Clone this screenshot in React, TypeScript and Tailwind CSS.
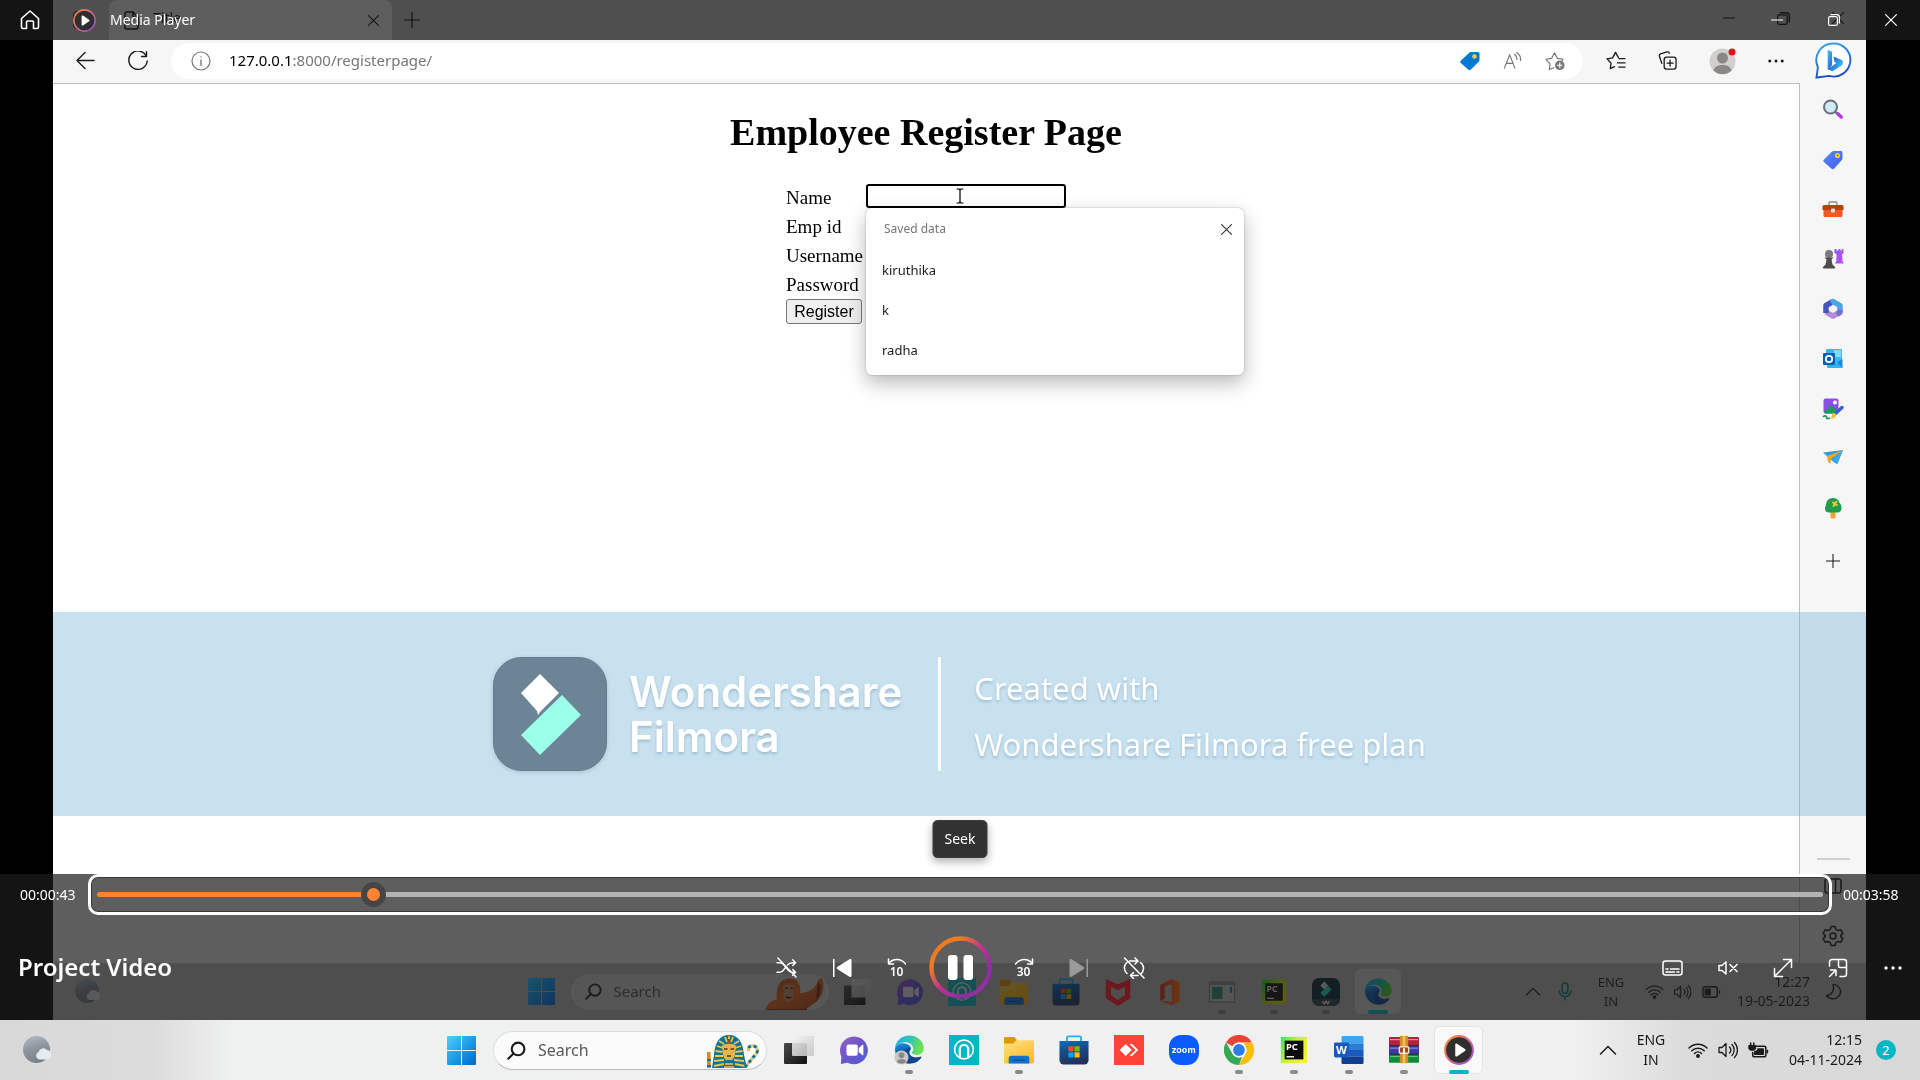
import React from "react";

type IconProps = { className?: string };
type SvgProps = { className?: string; box?: string; children: React.ReactNode };

const UI = "font-['Noto_Sans','Open_Sans',sans-serif]";

/* Base wrappers ---------------------------------------------------- */

function Line({ className = "size-6", box = "0 0 24 24", children }: SvgProps) {
  return (
    <svg className={className} viewBox={box} fill="none" stroke="currentColor" strokeWidth="1.5" strokeLinecap="round" strokeLinejoin="round" aria-hidden="true">
      {children}
    </svg>
  );
}

function Art({ className = "size-6", box = "0 0 32 32", children }: SvgProps) {
  return (
    <svg className={className} viewBox={box} aria-hidden="true">
      {children}
    </svg>
  );
}

function Gradient({ id, stops, x2 = 1, y2 = 1 }: { id: string; stops: string[]; x2?: number; y2?: number }) {
  return (
    <linearGradient id={id} x1="0" y1="0" x2={x2} y2={y2}>
      {stops.map((c, i) => (
        <stop key={i} offset={i / (stops.length - 1)} stopColor={c} />
      ))}
    </linearGradient>
  );
}

function SharedGradients() {
  return (
    <svg className="absolute size-0" aria-hidden="true">
      <defs>
        <Gradient id="g-win" stops={["#4cd0ff", "#1e9de6", "#0067c8"]} />
        <Gradient id="g-chat" stops={["#9a5fc4", "#6a57c9", "#4f5fd6"]} />
        <Gradient id="g-edge-top" stops={["#2aa7e8", "#2bc3c0", "#6ee04d"]} y2={0.3} />
        <Gradient id="g-edge-bot" stops={["#1b9be8", "#0c59a4", "#124a8f"]} x2={0.4} />
        <Gradient id="g-folder" stops={["#ffe08a", "#fbbf24"]} x2={0.6} />
        <Gradient id="g-store" stops={["#0a6fc2", "#174a86", "#22325c"]} x2={0.3} />
        <Gradient id="g-player" stops={["#ff8a2b", "#d9678c", "#8a4fd0"]} />
        <Gradient id="g-pause" stops={["#f07a22", "#f07a22", "#c0348f", "#8a2f9e", "#a02cb0"]} />
        <Gradient id="g-pc" stops={["#2fe86a", "#c8f03a", "#f6ef3a"]} y2={0.6} />
        <Gradient id="g-bing" stops={["#35a8ea", "#2d7fd8", "#1e4fc0"]} x2={0.3} />
        <Gradient id="g-bing-b" stops={["#3ac6f2", "#2b6fe0", "#37c3e8"]} y2={0.7} />
        <Gradient id="g-moon" stops={["#b6c0ca", "#8e979f", "#7a8289"]} x2={0.3} />
        <Gradient id="g-office" stops={["#b8322a", "#ea5a2c", "#f5873a"]} y2={0} />
        <Gradient id="g-ape" stops={["#a4552c", "#d4713c", "#9c4c28"]} />
        <Gradient id="g-black" stops={["#4a4a4a", "#111111"]} />
        <Gradient id="g-glass" stops={["#f4f4f4", "#c4c4c4"]} />
        <Gradient id="g-tag" stops={["#5b8df6", "#3e5bf0"]} />
        <Gradient id="g-purple" stops={["#8a5cf0", "#c04af0"]} />
      </defs>
    </svg>
  );
}

/* Taskbar artwork -------------------------------------------------- */

const WindowsIcon = ({ className }: IconProps) => (
  <Art className={className} box="0 0 29 29">
    <path fill="url(#g-win)" d="M1 0h13v14H0V1a1 1 0 0 1 1-1ZM15 0h13a1 1 0 0 1 1 1v13H15ZM0 15h14v14H1a1 1 0 0 1-1-1ZM15 15h14v13a1 1 0 0 1-1 1H15Z" />
  </Art>
);

const WeatherIcon = ({ className }: IconProps) => (
  <Art className={className} box="0 0 28 28">
    <circle cx="13.500" cy="13.500" r="13.500" fill="url(#g-moon)" />
    <path fill="#e6ebf0" d="M16 23.500a4 4 0 0 1-.5-7.500 5 5 0 0 1 8.500-2 4 4 0 0 1 4 5 4 4 0 0 1-3.500 4.500Z" />
  </Art>
);

const TaskViewIcon = ({ className }: IconProps) => (
  <Art className={className} box="0 0 30 28">
    <rect y="7" width="23" height="21" rx="1" fill="url(#g-black)" />
    <rect x="8" y="0" width="22" height="20" rx="1" fill="url(#g-glass)" opacity="0.88" />
  </Art>
);

const ChatIcon = ({ className }: IconProps) => (
  <Art className={className}>
    <path fill="url(#g-chat)" d="M16 1.500a15 14.800 0 1 1-7 28L2 31l.5-8A15 15 0 0 1 16 1.500Z" />
    <rect x="8" y="10" width="12" height="12" rx="2" fill="#fff" />
    <path fill="#fff" d="m21 14 4-3.500c.6-.4 1-.2 1 .4v10.200c0 .6-.4.8-1 .4L21 18Z" />
  </Art>
);

const EdgeIcon = ({ className, badge = false }: IconProps & { badge?: boolean }) => (
  <Art className={className}>
    <path fill="url(#g-edge-bot)" d="M1 15C2 10 7 8 12 9c4 .8 6.500 3.500 6 6-.5 1.500-2 2.500-1.500 5 .8 3 5 4.500 9 3.800 1.500-.3 3-1 3.500-.5.500.500-.4 1.500-1 2.200A15.500 15.500 0 0 1 1 15Z" />
    <path fill="#0b3f86" opacity="0.55" d="M11 17c-1 6 3 12 10 13.200A15.500 15.500 0 0 0 28 25.500c.8-1 1.500-2 .8-2.400-.8-.2-2 .7-4.500.9-5 .4-9-3-8-6.600.3-1.200 1-1.800 1.500-2.700C15 13 11.600 13.500 11 17Z" />
    <path fill="url(#g-edge-top)" d="M1 14C2 6 8.500.500 16.500.500 25 .5 32 7 31.700 14.500c-.2 4.500-3.500 7-8 6.700-2.500-.2-5-1.200-4.700-2.500.2-.9 1.500-1.500 1.500-4C20.400 10.500 16 7.500 11 7.800 6.500 8 3 10.500 1 14Z" />
    {badge && (
      <g>
        <circle cx="8" cy="24" r="7.500" fill="#c9c7c5" />
        <circle cx="8" cy="21.500" r="3" fill="#8a8886" />
        <path fill="#8a8886" d="M3 28.500a5.300 4.500 0 0 1 10 0 7 7 0 0 1-10 0Z" />
      </g>
    )}
  </Art>
);

const TealAppIcon = ({ className }: IconProps) => (
  <Art className={className}>
    <path fill="#00b7c3" d="M0 0h32v32H0z" />
    <circle cx="16" cy="15.500" r="10" fill="none" stroke="#fff" strokeWidth="1.800" />
    <path fill="none" stroke="#fff" strokeWidth="2.400" d="M11.500 24v-9a4.500 4.500 0 0 1 9 0v9" />
  </Art>
);

const FolderIcon = ({ className }: IconProps) => (
  <Art className={className}>
    <path fill="#d99a06" d="M0 3.500A1.500 1.500 0 0 1 1.500 2H11l3 3.500V12H0Z" />
    <path fill="url(#g-folder)" d="M0 9h10l3-3.500h17.500A1.500 1.500 0 0 1 32 7v22a1.500 1.500 0 0 1-1.500 1.500h-29A1.500 1.500 0 0 1 0 29Z" />
    <path fill="#1173c8" d="M5 30.500V25a3 3 0 0 1 3-3h16a3 3 0 0 1 3 3v5.500Z" />
    <rect x="10" y="26" width="12" height="1.500" rx=".7" fill="#0a4f94" />
  </Art>
);

const StoreIcon = ({ className }: IconProps) => (
  <Art className={className}>
    <path fill="none" stroke="#22b3ee" strokeWidth="2" d="M8.500 9V3a1.500 1.500 0 0 1 1.500-1.500h12A1.500 1.500 0 0 1 23.500 3v6" />
    <path fill="url(#g-store)" d="M.5 6.500h31V27a4.500 4.500 0 0 1-4.500 4.500H5A4.500 4.500 0 0 1 .5 27Z" />
    <path fill="#f25022" d="M10 12h5.500v5.500H10z" />
    <path fill="#7fba00" d="M16.500 12H22v5.500h-5.500z" />
    <path fill="#00a4ef" d="M10 18.500h5.500V24H10z" />
    <path fill="#ffb900" d="M16.500 18.500H22V24h-5.500z" />
  </Art>
);

const AnyDeskIcon = ({ className }: IconProps) => (
  <Art className={className}>
    <path fill="#ff4338" d="M0 0h32v32H0z" />
    <path fill="#fff" d="m12.500 9.500 6.500 6.500-6.500 6.500L6 16ZM16.500 9.500h2.800l6.500 6.500-6.500 6.500h-2.800L23 16Z" />
  </Art>
);

const ZoomIcon = ({ className }: IconProps) => (
  <span className={`${className} flex items-center justify-center rounded-[12px] bg-[#0b5cff] pb-[2px] font-['Inter',sans-serif] text-[9px] leading-none font-bold text-white`}>zoom</span>
);

const ChromeIcon = ({ className }: IconProps) => (
  <Art className={className}>
    <path fill="#ea4335" d="M2.100 8A16 16 0 0 1 29.900 8H16a8 8 0 0 0-7 4Z" />
    <path fill="#fbbc04" d="M29.900 8A16 16 0 0 1 16 32l6.900-12A8 8 0 0 0 22.900 12L21 8Z" />
    <path fill="#34a853" d="M2.100 8 9.100 20A8 8 0 0 0 19.500 23.200L16 32A16 16 0 0 1 2.100 8Z" />
    <circle cx="16" cy="16" r="8" fill="#fff" />
    <circle cx="16" cy="16" r="6.300" fill="#2f7de9" />
  </Art>
);

const PyCharmIcon = ({ className }: IconProps) => (
  <Art className={className}>
    <path fill="url(#g-pc)" d="M2 2h28v28H2z" />
    <path fill="#0a0a0a" d="M6 6h20v20H6z" />
    <path fill="#fff" d="M8 22.500h8V24H8z" />
    <text x="7.500" y="16" fontSize="10" fontWeight="700" fill="#fff" fontFamily="Noto Sans, sans-serif">PC</text>
  </Art>
);

const WordIcon = ({ className }: IconProps) => (
  <Art className={className}>
    <path fill="#41a5ee" d="M9 1h21a1.500 1.500 0 0 1 1.500 1.500V9H8V2.500A1.500 1.500 0 0 1 9 1Z" />
    <path fill="#2b7cd3" d="M8 9h23.500v7H8z" />
    <path fill="#185abd" d="M8 16h23.500v7H8z" />
    <path fill="#103f91" d="M8 23h23.500v6.500A1.500 1.500 0 0 1 30 31H9.500A1.500 1.500 0 0 1 8 29.500Z" />
    <rect x="0" y="8" width="16" height="16" rx="1.500" fill="#185abd" />
    <text x="2" y="20.500" fontSize="12" fontWeight="700" fill="#fff" fontFamily="Noto Sans, sans-serif">W</text>
  </Art>
);

const RarIcon = ({ className }: IconProps) => (
  <Art className={className}>
    <rect y="2" width="32" height="9.500" rx="1" fill="#b3213c" />
    <rect y="11.500" width="32" height="9" rx="1" fill="#3d3aa8" />
    <rect y="20.500" width="32" height="9" rx="1" fill="#118a3a" />
    <path stroke="#e8b7c0" strokeWidth="1" d="M1 5h30" />
    <path stroke="#9d9bea" strokeWidth="1" d="M1 14h30" />
    <path stroke="#5fd488" strokeWidth="1" d="M1 23h30" />
    <path stroke="#1c1c2a" strokeWidth="1.200" d="M0 11.500h32M0 20.500h32" />
    <path fill="#d78a2c" d="M11.500 1h9v29h-9z" />
    <path fill="#f1c05e" d="M14.500 1h3v29h-3z" />
    <rect x="11" y="12.500" width="10" height="7" rx="1" fill="#a8481c" stroke="#f4e3c0" strokeWidth="1.500" />
    <path fill="#fff" d="M15 14h2v6h-2z" />
  </Art>
);

const MediaIcon = ({ className }: IconProps) => (
  <Art className={className}>
    <circle cx="16" cy="16" r="14.800" fill="#2f2f2f" stroke="url(#g-player)" strokeWidth="2.200" />
    <path fill="#fff" d="M12 10.200c0-1 1-1.500 1.800-1l8.600 5.700c.8.500.8 1.600 0 2.100l-8.600 5.800c-.8.500-1.800 0-1.800-1Z" />
  </Art>
);

const McAfeeIcon = ({ className }: IconProps) => (
  <Art className={className}>
    <path fill="#e0262f" d="m2 1 14 6 14-6v22l-14 9-14-9Zm6 9v9.500l8 5.500 8-5.500V10l-8 4Z" />
  </Art>
);

const OfficeIcon = ({ className }: IconProps) => (
  <Art className={className}>
    <path fill="url(#g-office)" d="M18 1 27.500 4.500V27L18 31 5 26l13 1.500V7l-8 2.500v14L5 26V8Z" />
  </Art>
);

const WindowAppIcon = ({ className }: IconProps) => (
  <Art className={className}>
    <path fill="#dcdcdc" stroke="#6f6f6f" d="M1.500 4.500h29v23h-29z" />
    <path fill="#8f989f" d="M2 5h28v3H2z" />
    <path fill="#3f8f80" d="M4.500 10h12v14h-12z" />
    <path fill="#2e7fb8" d="M25 10h2.500v7H25z" />
  </Art>
);

const FilmoraIcon = ({ className }: IconProps) => (
  <Art className={className}>
    <rect width="32" height="32" rx="8" fill="#0b2330" />
    <path fill="#e4f2f4" d="m14 4 4.500 4.500L14 13 9.500 8.500Z" />
    <path fill="#4fe0c4" d="m18 8.500 4.500 4.500-8.500 8.500L9.500 17Z" />
    <path fill="#36474f" d="M1 24h30a8 8 0 0 1-7 8H8a8 8 0 0 1-7-8Z" />
    <path fill="none" stroke="#fff" strokeWidth="1.500" d="m12 26.500 2 3 2-3 2 3 2-3" />
  </Art>
);

const PharaohIcon = ({ className }: IconProps) => (
  <Art className={className} box="0 0 54 34">
    <path fill="#0e7490" d="M22 1c-10 0-14 8-15 20L5 34h35l-3-13C36 9 32 1 22 1Z" />
    <path stroke="#f2c14e" strokeWidth="1.800" fill="none" d="M12 7l5 3M10 12l6 2M8.500 17l7 1M8 22l8 0M7 27l10-1M7 32l10-2M32 7l-5 3M34 12l-6 2M35.500 17l-7 1M36 22l-8 0M37 27l-10-1M38 32l-10-2M18 3l2 5M22 2v6M26 3l-2 5" />
    <path fill="#e9b44c" d="M15 12c2-3 12-3 14 0l-1 9c-1 4-4 6-6 6s-5-2-6-6Z" />
    <path stroke="#5b3410" strokeWidth="1.300" d="M17 15h3.500M23.500 15H27M20 22h4" />
    <path fill="#0e7490" d="M20 26h4l-1 7h-2Z" />
    <path fill="#cf3030" d="M21 5h2v4h-2z" />
    <path stroke="#f2c14e" strokeWidth="1.500" d="M18 30h8M17 33h10" />
    <path stroke="#d38a2d" strokeWidth="4" d="M1.500 18 2 34" />
    <path stroke="#0e7490" strokeWidth="4" d="M1.800 25v2M2 31v2" />
    <path fill="none" stroke="#e9c375" strokeWidth="3" d="M38 33 49 20c4-5-1-9-5-8-3 1-3 3-2.500 5" />
    <path fill="none" stroke="#0e7490" strokeWidth="3" strokeDasharray="3 3" d="M38 33 49 20c4-5-1-9-5-8-3 1-3 3-2.500 5" />
  </Art>
);

const ApeIcon = ({ className }: IconProps) => (
  <Art className={className} box="0 0 60 32">
    <path fill="url(#g-ape)" d="M0 32c2-6 6-9 12-11-1-4 0-12 3-16 3-5 13-6 17-2 3 3 4 8 3 12 9 0 18-6 18-14l4-1c4 10-1 22-9 26l-8 6Z" />
    <path fill="#c8977c" d="M18 8c2-2 9-2 11 0l-1 7c1 5-1 9-4.500 9S17 20 19 15Z" />
    <path stroke="#2b1a12" strokeWidth="1.500" d="M20 10h2.500M25.500 10H28M21 19c2 1 4 1 5.500 0" fill="none" />
    <path fill="#6d3218" d="m53 3 3 6-2 9-3 4ZM2 31h40v1H2Z" />
  </Art>
);

/* Line icons ------------------------------------------------------- */

const CloseIcon = ({ className }: IconProps) => (
  <Line className={className} box="0 0 12 12"><path strokeWidth="1.200" d="m.6.6 10.800 10.800M11.400.6.6 11.400" /></Line>
);
const MinimizeIcon = ({ className }: IconProps) => (
  <Line className={className} box="0 0 12 12"><path strokeWidth="1.200" d="M.5 6h11" /></Line>
);
const RestoreIcon = ({ className }: IconProps) => (
  <Line className={className} box="0 0 12 12"><rect x=".6" y="2.600" width="8.800" height="8.800" rx="1.500" strokeWidth="1.200" /><path strokeWidth="1.200" d="M3 .7h5.700a2.700 2.700 0 0 1 2.700 2.700V9" /></Line>
);
const PlusIcon = ({ className }: IconProps) => (
  <Line className={className} box="0 0 16 16"><path strokeWidth="1.200" strokeLinecap="butt" d="M8 0v16M0 8h16" /></Line>
);
const DotsIcon = ({ className }: IconProps) => (
  <Art className={className} box="0 0 18 6"><circle cx="2" cy="3" r="1.700" fill="currentColor" /><circle cx="9" cy="3" r="1.700" fill="currentColor" /><circle cx="16" cy="3" r="1.700" fill="currentColor" /></Art>
);
const ChevronUp = ({ className }: IconProps) => (
  <Line className={className} box="0 0 18 10"><path d="m1.500 9 7.500-7.500L16.500 9" /></Line>
);
const SearchIcon = ({ className }: IconProps) => (
  <Line className={className} box="0 0 18 18"><circle cx="10.500" cy="7.500" r="6" strokeWidth="2" /><path strokeWidth="2" d="m6.200 11.800-5 5" /></Line>
);
const WifiIcon = ({ className }: IconProps) => (
  <Line className={className} box="0 0 20 16"><path d="M1 6a12.700 12.700 0 0 1 18 0M3.800 8.800a8.800 8.800 0 0 1 12.400 0M6.500 11.500a5 5 0 0 1 7 0" /><circle cx="10" cy="14" r="1.200" fill="currentColor" /></Line>
);
const VolumeIcon = ({ className }: IconProps) => (
  <Line className={className} box="0 0 20 18"><path strokeWidth="1.300" d="M1 6.500h3l4-4v13l-4-4H1ZM11.500 6a4 4 0 0 1 0 6M14 3.500a8 8 0 0 1 0 11M16.500 1.500a11 11 0 0 1 0 15" /></Line>
);
const BatteryPlugIcon = ({ className }: IconProps) => (
  <Line className={className} box="0 0 20 16">
    <path d="M8 4h7.500A1.500 1.500 0 0 1 17 5.500v7a1.500 1.500 0 0 1-1.500 1.500H6a1.500 1.500 0 0 1-1.500-1.500V10" />
    <path fill="currentColor" d="M9.500 6.500h5v5h-8V9M18.500 8v2M1 3.500h6V6L5.500 7.500h-3L1 6ZM2.500 3.500V1M5.500 3.500V1" />
  </Line>
);
const BatteryIcon = ({ className }: IconProps) => (
  <Line className={className} box="0 0 20 14"><rect x="1" y="1.500" width="15" height="11" rx="2" /><path fill="currentColor" d="M3.500 4h5v6h-5zM18.500 6v2" /></Line>
);
const MicIcon = ({ className }: IconProps) => (
  <Line className={className} box="0 0 14 20"><rect x="4" y="1" width="6" height="11" rx="3" /><path d="M1 9.500a6 6 0 0 0 12 0M7 15.500V19" /></Line>
);
const CrescentIcon = ({ className }: IconProps) => (
  <Line className={className} box="0 0 18 18"><path d="M8.500 1.500C16 2 19 10 14 14.500 10 18 4 17 1.500 13.500 7.500 13 10 8 8.500 1.500Z" /></Line>
);
const HomeIcon = ({ className }: IconProps) => (
  <Line className={className} box="0 0 20 20"><path strokeWidth="1.600" d="M1.500 8.500 10 1l8.500 7.500V17a1.500 1.500 0 0 1-1.500 1.500h-3.500V12a1 1 0 0 0-1-1h-5a1 1 0 0 0-1 1v6.500H3A1.500 1.500 0 0 1 1.500 17Z" /></Line>
);
const DocIcon = ({ className }: IconProps) => (
  <Line className={className} box="0 0 16 20"><path strokeWidth="1.600" d="M9.500 1H3a2 2 0 0 0-2 2v14a2 2 0 0 0 2 2h10a2 2 0 0 0 2-2V6.500Zm0 0v4a1.500 1.500 0 0 0 1.500 1.500h4" /></Line>
);
const BackIcon = ({ className }: IconProps) => (
  <Line className={className} box="0 0 20 20"><path strokeWidth="1.400" d="M19 10H1.500M9.500 1.500 1 10l8.500 8.500" /></Line>
);
const ReloadIcon = ({ className }: IconProps) => (
  <Line className={className} box="0 0 20 20"><path strokeWidth="1.400" d="M18 4.500A9.200 9.200 0 1 0 19.200 10M18.500.8v4.700h-5" /></Line>
);
const InfoIcon = ({ className }: IconProps) => (
  <Line className={className} box="0 0 20 20"><circle cx="10" cy="10" r="9" strokeWidth="1.200" /><path strokeWidth="1.400" d="M10 9v5.500M10 6v.1" /></Line>
);
const ShoppingTag = ({ className }: IconProps) => (
  <Art className={className} box="0 0 20 20"><path fill="#0078d4" d="M11 1h7a1.500 1.500 0 0 1 1.500 1.500V9a2 2 0 0 1-.6 1.500l-8 8a2 2 0 0 1-2.800 0L.8 12a1.500 1.500 0 0 1 0-2.200L9.500 1.500A2 2 0 0 1 11 1Z" /><circle cx="14.500" cy="5.500" r="2.300" fill="#f7c948" /></Art>
);
const ReadAloudIcon = ({ className }: IconProps) => (
  <Line className={className} box="0 0 20 20"><path strokeWidth="1.200" d="M1.500 18 7 4l5.500 14M3.500 13h7M12 3.500a6 6 0 0 1 2.500 5.500M14.500 1.500a9 9 0 0 1 4 8.500" /></Line>
);
const StarPlusIcon = ({ className }: IconProps) => (
  <Line className={className} box="0 0 22 20"><path strokeWidth="1.200" d="m9 17-4.500 2 .8-6L1 8.200l6-1L10 1.500l3 5.700 6 1-1 1.500" /><circle cx="15.500" cy="14.500" r="5" fill="currentColor" stroke="none" /><path stroke="#fff" strokeWidth="1.200" d="M15.500 12v5M13 14.500h5" /></Line>
);
const FavoritesIcon = ({ className }: IconProps) => (
  <Line className={className} box="0 0 21 20"><path strokeWidth="1.400" d="M9 16.500 4.500 18.500l.8-5.700L1 8.200l6-1L10 1.500l3 5.200M13.500 8H20M12 12.500h8M13.500 17H20" /></Line>
);
const CollectionsIcon = ({ className }: IconProps) => (
  <Line className={className} box="0 0 20 20"><rect x="6.500" y="6.500" width="12.500" height="12.500" rx="2.500" strokeWidth="1.400" /><path strokeWidth="1.400" d="M4 13 1.500 5.500a2 2 0 0 1 1.300-2.400L9.500 1a2 2 0 0 1 2.500 1.300M12.750 9.700v6.200M9.700 12.800h6.200" /></Line>
);
const AvatarIcon = ({ className }: IconProps) => (
  <Art className={className} box="0 0 28 28"><circle cx="13.500" cy="14.500" r="13" fill="#d2d0ce" /><circle cx="13.500" cy="11" r="5.500" fill="#8a8886" /><path fill="#8a8886" d="M4.500 23.500c1-4 4.500-5.500 9-5.500s8 1.500 9 5.500a13 13 0 0 1-18 0Z" /><circle cx="23" cy="5" r="3.500" fill="#e3131b" /></Art>
);
const BingIcon = ({ className }: IconProps) => (
  <Art className={className} box="0 0 38 38"><path fill="#fff" stroke="url(#g-bing)" strokeWidth="2" d="M19 1.500a17 17 0 1 1-4.500 33.300L1.500 36.500 3 26A17.200 17.200 0 0 1 19 1.500Z" /><path fill="url(#g-bing-b)" d="m13 8 4.500 2v14l-4.500 4.500Zm6 7 8.500 3.500c1.500 1 2 4-.5 6L18 30l-5-2 9-6.500-2-1Z" /></Art>
);
const GearIcon = ({ className }: IconProps) => (
  <Line className={className} box="0 0 22 22"><circle cx="11" cy="11" r="3" strokeWidth="1.600" /><path strokeWidth="1.600" d="M9 1.500h4l.8 2.900 2.200 1.200 2.900-.8 2 3.500-2.100 2v1.400l2.100 2-2 3.500-2.900-.8-2.200 1.200-.8 2.900H9l-.8-2.900L6 16.400l-2.900.8-2-3.500 2.100-2v-1.400l-2.100-2 2-3.500 2.900.8 2.200-1.200Z" /></Line>
);
const SplitIcon = ({ className }: IconProps) => (
  <Line className={className} box="0 0 18 16"><rect x="1" y="1" width="16" height="14" rx="2.500" strokeWidth="1.600" /><path strokeWidth="1.600" d="M11.500 1v14" /></Line>
);

/* Sidebar artwork -------------------------------------------------- */

const sidebarArt: { name: string; art: React.ReactNode }[] = [
  { name: "Search", art: <><circle cx="9.500" cy="9" r="6.500" fill="#cfeaf8" stroke="#6b7075" strokeWidth="2" /><path stroke="#b33ce0" strokeWidth="3.500" strokeLinecap="round" d="m16.500 15.500 3.800 3.500" /><path stroke="#6b7075" strokeWidth="2" d="m14 13.500 2 1.800" /></> },
  { name: "Shopping", art: <><path fill="url(#g-tag)" d="M13 3h7a1.500 1.500 0 0 1 1.500 1.500V10a3 3 0 0 1-.9 2.200l-7.500 8.300a2 2 0 0 1-2.800 0L2.800 14a1.500 1.500 0 0 1 0-2.200L10.500 4A4 4 0 0 1 13 3Z" /><circle cx="16.500" cy="7.500" r="2.600" fill="#f5d142" /><circle cx="16.500" cy="7.500" r="1" fill="#8b7a1a" /></> },
  { name: "Tools", art: <><path fill="none" stroke="#8c8f93" strokeWidth="1.400" d="M8 7V5a1 1 0 0 1 1-1h6a1 1 0 0 1 1 1v2" /><path fill="#f05a22" d="M2.500 11h19v6.500a1.500 1.500 0 0 1-1.500 1.500H4a1.500 1.500 0 0 1-1.500-1.500Z" /><path fill="#c23a10" d="M1.500 8.500A1.500 1.500 0 0 1 3 7h18a1.500 1.500 0 0 1 1.500 1.500V12h-21Z" /><rect x="10" y="10.500" width="4" height="4" rx="1" fill="#d9dde0" /></> },
  { name: "Games", art: <><path fill="url(#g-purple)" d="M13.500 2h2v1.500h2V2h2v1.500h1.500V2h1.500v4l-1.500 1.500.7 7.500 1.300 1.500h-9l1.200-2 .5-7-2.200-1.500Z" /><circle cx="8" cy="7" r="4" fill="#7a7a7a" /><path fill="#4c4c4c" d="M3.500 10.500h9l-2 2 1 5 2.500 2.500a1 1 0 0 1-.5 1.500h-11A1 1 0 0 1 2 20l2.500-2.500 1-5Z" /></> },
  { name: "Microsoft 365", art: <g fill="none" strokeWidth="5.500" strokeLinejoin="round"><path stroke="#b48ad6" d="m19 15-7 4.200-7-4.200" /><path stroke="#4455bd" d="M5 16V8.500l7-4" /><path stroke="#4fa3e8" d="m10 5.600 2-1.100 7 4.200V15" /><path stroke="#7a6fd0" d="M19 13v2.500l-3 1.800" /></g> },
  { name: "Outlook", art: <><path fill="#37b8f0" d="M6 2h14a1 1 0 0 1 1 1v12H5V3Z" /><path fill="#1076c8" d="M5 8h8v7H5Z" /><path fill="#7fdcf8" d="M13 3h7v7h-7z" /><path fill="#1b86d8" d="m21.500 12-9 5.500 9 3.500Z" /><path fill="#2cb6ee" d="M6 15h9l7 6H7a1 1 0 0 1-1-1Z" /><rect x="2" y="6" width="12" height="12" rx="1" fill="#0a5fb4" /><circle cx="8" cy="12" r="3.200" fill="none" stroke="#fff" strokeWidth="1.800" /></> },
  { name: "Image Creator", art: <><rect x="2.500" y="1.500" width="15" height="15" rx="2" fill="#8a4fe8" /><circle cx="14" cy="5.500" r="2" fill="#fff" /><path fill="#1c9a5c" d="m3 15 5-5c1.500-1.500 3-1.500 4.500 0l5 5-1 1.500H4Z" /><path stroke="#3f5bdc" strokeWidth="3.500" strokeLinecap="round" d="m21 10.500-6.500 6" /><path fill="#f5bd3a" d="M12 16c2-.5 3.500 1 3 2.500-.6 2.500-3 3.500-5.500 2.500 1.800-1 1-4 2.500-5Z" /><path fill="none" stroke="#1c9a5c" strokeWidth="1.600" d="M2 20c2-2 4-1 3.500.5s2 1 3.500.5" /></> },
  { name: "Drop", art: <><path fill="#2d9cdb" d="M2 6.500 22 4l-6.500 14-4-3Z" /><path fill="#f5a623" d="m6 10 16-6-12 9-.5 5-2.500-2Z" /><path fill="#3aa6ef" d="M22 4 10.500 14l6 4Z" /></> },
  { name: "E-tree", art: <><path fill="#eda52c" d="M9.500 15h5v6a1.500 1.500 0 0 1-1.500 1.500h-2A1.500 1.500 0 0 1 9.500 21Z" /><path fill="#1f9d4d" d="M12 2c4.500 0 6 3 6.500 5 2 1 2.500 5.500 1.500 7.500-1 1.800-3 2-4 2H8c-2.500 0-4-1.500-4-4 0-1.500.5-2.500 1-3C5 5 7.500 2 12 2Z" /><path stroke="#f5c93a" strokeWidth="2" strokeLinecap="round" d="M12 6.500 16 9M15.500 5.500 12.500 10" /></> },
];

/* Recorded browser ------------------------------------------------- */

function TabStrip() {
  return (
    <div className="flex h-10 items-stretch bg-[#cbcbcb] text-black">
      <div className="flex w-14 items-center px-5"><span className="size-[18px] rounded border border-black" /></div>
      <div className="flex w-[283px] items-center gap-[14px] rounded-t-lg bg-[#fafafa] pr-[13px] pl-[15px]">
        <DocIcon className="h-[19px] w-[15px]" />
        <span className="flex-1 pb-[5px] text-sm">Title</span>
        <button aria-label="Close tab"><CloseIcon className="size-[11px]" /></button>
      </div>
      <button aria-label="New tab" className="px-3"><PlusIcon className="size-4" /></button>
      <div className="ml-auto flex items-center gap-[42px] pr-[22px] pb-1">
        <MinimizeIcon className="size-3" />
        <RestoreIcon className="size-[13px]" />
        <CloseIcon className="size-3" />
      </div>
    </div>
  );
}

function Toolbar() {
  return (
    <div className="flex h-[43px] items-center bg-[#f6f6f6] pb-[2px] text-[#1b1b1b]">
      <button aria-label="Back" className="ml-[23px]"><BackIcon className="size-[19px]" /></button>
      <button aria-label="Reload" className="ml-[33px]"><ReloadIcon className="size-5" /></button>
      <div className="ml-[23px] flex h-9 flex-1 items-center rounded-full bg-white pr-[17px] pl-5 text-[#767676]">
        <InfoIcon className="size-5" />
        <p className="ml-[18px] flex-1 text-[15px] text-[#767676]"><span className="text-black">127.0.0.1</span>:8000/registerpage/</p>
        <div className="flex items-center gap-[23px]">
          <ShoppingTag className="size-5" />
          <ReadAloudIcon className="size-[19px]" />
          <StarPlusIcon className="h-5 w-[21px]" />
        </div>
      </div>
      <div className="flex items-center pl-[23px]">
        <FavoritesIcon className="h-[19px] w-5" />
        <CollectionsIcon className="ml-8 size-[19px]" />
        <AvatarIcon className="ml-8 size-7" />
        <DotsIcon className="ml-[31px] h-[6px] w-4" />
        <BingIcon className="mr-[14px] ml-[31px] size-[37px]" />
      </div>
    </div>
  );
}

function AutofillMenu() {
  return (
    <div className={`absolute top-full left-0 z-10 w-[378px] rounded-md bg-white pb-1 text-left text-[#1b1b1b] shadow-[0_8px_20px_rgba(0,0,0,0.28),0_0_2px_rgba(0,0,0,0.3)] ${UI}`}>
      <div className="flex h-[43px] items-center justify-between pr-3 pl-[18px] text-xs text-[#767676]">
        <span>Saved data</span>
        <button type="button" aria-label="Close" className="text-[#333]"><CloseIcon className="size-[11px]" /></button>
      </div>
      {["kiruthika", "k", "radha"].map((v) => (
        <button type="button" key={v} className="flex h-10 w-full items-center px-4 text-[13px]">{v}</button>
      ))}
    </div>
  );
}

function RegisterPage() {
  return (
    <main className="flex-1 border-t border-r border-[#bdbdbd] bg-white font-['Liberation_Serif',serif] text-black">
      <h1 className="mt-[26px] text-center text-[38px] leading-[44px] font-bold">Employee Register Page</h1>
      <form className="mx-auto mt-[25px] w-[280px] text-[19px]">
        {["Name", "Emp id", "Username", "Password"].map((label) => (
          <div key={label} className="grid h-[29px] grid-cols-[80px_200px] items-center">
            <label htmlFor={label} className="pt-[5px]">{label}</label>
            <div className="relative">
              <input id={label} type={label === "Password" ? "password" : "text"} className={label === "Name" ? "block h-6 w-full rounded-[3px] border-2 border-black" : "block h-6 w-full rounded-[2px] border border-[#767676]"} />
              {label === "Name" && (
                <>
                  <Line className="absolute top-1 left-[90px] h-4 w-2" box="0 0 8 16"><path strokeWidth="1.200" d="M1 1h2l1 1 1-1h2M4 2v12M1 15h2l1-1 1 1h2" /></Line>
                  <AutofillMenu />
                </>
              )}
            </div>
          </div>
        ))}
        <button type="button" className="mt-1 flex h-[25px] w-[76px] items-center justify-center rounded-[3px] border border-[#767676] bg-[#efefef] font-['Liberation_Sans',sans-serif] text-base">Register</button>
      </form>
    </main>
  );
}

function Sidebar() {
  return (
    <aside className="flex w-[66px] flex-col items-center bg-[#f6f6f6] pt-[15px] text-[#1b1b1b]">
      <nav className="flex h-[422px] flex-col justify-between">
        {sidebarArt.map((s) => (
          <button key={s.name} aria-label={s.name}><Art className="size-6" box="0 0 24 24">{s.art}</Art></button>
        ))}
      </nav>
      <button aria-label="Customize" className="mt-[34px]"><PlusIcon className="size-[14px]" /></button>
      <hr className="mt-auto w-[33px] border-t-2 border-[#cfcfcf]" />
      <button aria-label="Split screen" className="mt-[18px]"><SplitIcon className="h-4 w-[18px]" /></button>
      <button aria-label="Settings" className="mt-[31px] mb-4"><GearIcon className="size-[22px]" /></button>
    </aside>
  );
}

function Indicator({ state }: { state: "none" | "open" | "active" }) {
  if (state === "none") return null;
  return <span className={`absolute bottom-[6px] left-1/2 h-1 -translate-x-1/2 rounded-full ${state === "active" ? "w-5 bg-[#00b7c3]" : "w-2 bg-[#8a8a8a]"}`} />;
}

type TaskApp = { name: string; icon: (p: IconProps) => React.ReactElement; state?: "open" | "active" };

const recordedApps: TaskApp[] = [
  { name: "Task view", icon: TaskViewIcon },
  { name: "Chat", icon: ChatIcon },
  { name: "MyASUS", icon: TealAppIcon },
  { name: "Explorer", icon: FolderIcon },
  { name: "Store", icon: StoreIcon },
  { name: "McAfee", icon: McAfeeIcon },
  { name: "Office", icon: OfficeIcon },
  { name: "Window", icon: WindowAppIcon, state: "open" },
  { name: "PyCharm", icon: PyCharmIcon, state: "open" },
  { name: "Filmora", icon: FilmoraIcon, state: "open" },
  { name: "Edge", icon: (p) => <EdgeIcon {...p} />, state: "active" },
];

const desktopApps: TaskApp[] = [
  { name: "Task view", icon: TaskViewIcon },
  { name: "Chat", icon: ChatIcon },
  { name: "Edge", icon: (p) => <EdgeIcon {...p} badge />, state: "open" },
  { name: "MyASUS", icon: TealAppIcon },
  { name: "Explorer", icon: FolderIcon, state: "open" },
  { name: "Store", icon: StoreIcon },
  { name: "AnyDesk", icon: AnyDeskIcon },
  { name: "Zoom", icon: ZoomIcon },
  { name: "Chrome", icon: ChromeIcon, state: "open" },
  { name: "PyCharm", icon: PyCharmIcon, state: "open" },
  { name: "Word", icon: WordIcon, state: "open" },
  { name: "WinRAR", icon: RarIcon, state: "open" },
  { name: "Media Player", icon: MediaIcon, state: "active" },
];

function RecordedTaskbar() {
  return (
    <div className="grid h-[57px] grid-cols-[1fr_auto_1fr] items-stretch bg-[#c9c9c9] text-[#1b1b1b]">
      <div className="flex items-center pl-[22px]"><WeatherIcon className="size-[25px]" /></div>
      <div className="flex items-center">
        <button aria-label="Start" className="flex w-[52px] justify-center"><WindowsIcon className="size-[27px]" /></button>
        <div className="mx-[3px] flex h-9 w-[258px] items-center overflow-hidden rounded-full bg-[#e2e2e2] pr-1 pl-[14px]">
          <SearchIcon className="size-[17px]" />
          <span className="ml-3 flex-1 text-[15px] text-[#555]">Search</span>
          <ApeIcon className="mt-1 h-8 w-[60px]" />
        </div>
        {recordedApps.map((a) => (
          <button key={a.name} aria-label={a.name} className="relative flex h-[57px] w-[52px] items-center justify-center">
            {a.state === "active" && <span className="absolute inset-x-[3px] inset-y-[6px] rounded-md bg-[#e6e6e6]" />}
            <a.icon className="relative size-[28px]" />
            <Indicator state={a.state ?? "none"} />
          </button>
        ))}
      </div>
      <div className="flex items-center justify-end pr-6 text-[13px] leading-[19px]">
        <ChevronUp className="h-[9px] w-4" />
        <MicIcon className="ml-[17px] h-[19px] w-[14px] text-[#007a70]" />
        <div className="ml-[23px] w-8 text-center">ENG<br />IN</div>
        <WifiIcon className="ml-[18px] h-[15px] w-[19px]" />
        <VolumeIcon className="ml-[9px] h-4 w-[19px]" />
        <BatteryIcon className="ml-[10px] h-[14px] w-[19px]" />
        <div className="ml-[14px] w-[75px] pb-[2px] text-right text-sm leading-[19px]">12:27<br />19-05-2023</div>
        <CrescentIcon className="ml-[15px] size-[17px]" />
      </div>
    </div>
  );
}

function Watermark() {
  return (
    <div className="absolute inset-x-0 top-[60%] flex h-1/5 items-center justify-center bg-[#75b4d7]/40 text-white">
      <Art className="size-[114px] drop-shadow-sm" box="0 0 114 114">
        <rect x=".5" y=".5" width="113" height="113" rx="28" fill="#6c8596" stroke="#627c8d" />
        <path fill="#fff" d="m47 17 19 19-19 19-2 3-1-4-16-18Z" />
        <path fill="#9bffe9" d="m69 38 19 20-41 40-19-20Z" />
      </Art>
      <p className="ml-[22px] font-['Inter',sans-serif] text-[42px] leading-[45px] font-semibold [text-shadow:0_2px_3px_rgba(90,130,160,0.4)]">Wondershare<br />Filmora</p>
      <span className="ml-9 h-[114px] w-[3px] bg-white" />
      <p className="ml-[33px] pt-[3px] text-[31px] leading-[56px] [text-shadow:0_2px_3px_rgba(90,130,160,0.4)]">Created with<br />Wondershare Filmora free plan</p>
    </div>
  );
}

/* Player chrome ---------------------------------------------------- */

function PlayerTitleBar() {
  return (
    <header className="absolute inset-x-0 top-0 flex h-10 items-center bg-[#424242]/30 text-white backdrop-brightness-[0.42] backdrop-saturate-150">
      <button aria-label="Home" className="ml-5"><HomeIcon className="size-5" /></button>
      <MediaIcon className="ml-[33px] size-[23px]" />
      <span className="ml-[14px] text-sm">Media Player</span>
      <div className="ml-auto flex items-center gap-[45px] pr-[23px]">
        <button aria-label="Minimize"><MinimizeIcon className="size-3" /></button>
        <button aria-label="Restore"><RestoreIcon className="size-3" /></button>
        <button aria-label="Close"><CloseIcon className="size-3" /></button>
      </div>
    </header>
  );
}

function ControlButton({ label, children }: { label: string; children: React.ReactNode }) {
  return <button aria-label={label} className="flex h-12 w-[55px] items-center justify-center">{children}</button>;
}

function SkipArt({ amount, flip = false }: { amount: string; flip?: boolean }) {
  return (
    <span className="flex flex-col items-center">
      <Line className={flip ? "h-2 w-5 -scale-x-100" : "h-2 w-5"} box="0 0 20 8"><path d="M1.500 1v5h5M1.800 5.500C6 .2 14 .2 18.500 6" /></Line>
      <span className="text-xs leading-3 font-semibold">{amount}</span>
    </span>
  );
}

function PlayerControls() {
  return (
    <footer className="absolute inset-x-0 bottom-0 bg-[#424242]/30 text-white backdrop-brightness-[0.42] backdrop-saturate-150">
      <div className="flex items-center">
        <span className="w-[88px] pl-5 text-sm">00:00:43</span>
        <div className="flex h-[41px] flex-1 items-center rounded-[10px] border-[3px] border-white px-[6px] shadow-[inset_0_0_0_1px_#3a3a3a]">
          <input
            type="range"
            aria-label="Seek"
            min={0}
            max={1000}
            defaultValue={155}
            className="h-[25px] w-full appearance-none bg-transparent [&::-webkit-slider-runnable-track]:h-[5px] [&::-webkit-slider-runnable-track]:rounded-full [&::-webkit-slider-runnable-track]:bg-[linear-gradient(to_right,#ff8432_16%,#b4b4b4_16%)] [&::-webkit-slider-thumb]:mt-[-10px] [&::-webkit-slider-thumb]:size-[25px] [&::-webkit-slider-thumb]:appearance-none [&::-webkit-slider-thumb]:rounded-full [&::-webkit-slider-thumb]:border-[6px] [&::-webkit-slider-thumb]:border-[#454545] [&::-webkit-slider-thumb]:bg-[#ff8432]"
          />
        </div>
        <span className="w-[88px] pl-[11px] text-sm">00:03:58</span>
      </div>
      <div className="grid h-[105px] grid-cols-[1fr_auto_1fr] items-center">
        <h2 className="pb-[2px] pl-[18px] text-[24px] font-semibold">Project Video</h2>
        <div className="flex items-center">
          <ControlButton label="Shuffle off"><Line className="size-[21px]" box="0 0 22 22"><path d="M1 6h3c6 0 7 10 13 10h3M1 16h3c2.500 0 4-2 5.500-4.500M12 8.500C13.500 7 15 6 17 6h3M17.500 3l3 3-3 3M17.500 13l3 3-3 3M2 1l19 20" /></Line></ControlButton>
          <ControlButton label="Previous"><Art className="size-5" box="0 0 20 20"><path fill="currentColor" d="M1 1h1.500v18H1zM17.500 1.300c1-.6 2 0 2 1v15.400c0 1-1 1.600-2 1L5.500 11.200c-1-.6-1-1.800 0-2.400Z" /></Art></ControlButton>
          <ControlButton label="Back 10 seconds"><SkipArt amount="10" /></ControlButton>
          <button aria-label="Pause" className="flex w-[72px] justify-center">
            <Art className="size-[63px]" box="0 0 63 63">
              <circle cx="31.500" cy="31.500" r="29" fill="none" stroke="url(#g-pause)" strokeWidth="4.500" />
              <rect x="19" y="19" width="9.500" height="25" rx="3" fill="#fff" />
              <rect x="34.500" y="19" width="9.500" height="25" rx="3" fill="#fff" />
            </Art>
          </button>
          <ControlButton label="Forward 30 seconds"><SkipArt amount="30" flip /></ControlButton>
          <ControlButton label="Next"><Art className="size-5 text-[#9a9a9a]" box="0 0 20 20"><path fill="currentColor" d="M17.500 1H19v18h-1.500zM2.500 1.300c-1-.6-2 0-2 1v15.400c0 1 1 1.600 2 1l12-7.500c1-.6 1-1.800 0-2.400Z" /></Art></ControlButton>
          <ControlButton label="Repeat off"><Line className="size-[22px]" box="0 0 22 22"><path d="M6.500 4H14m-2-3 3 3-3 3M17.500 5.500c4 3 4 8 .5 11.500M15 18.500H8m2.500-3-3 3 3 3M4 16.500C.5 13.500.500 8 4 5.500M1.500 1l19.500 20" /></Line></ControlButton>
        </div>
        <div className="flex justify-end">
          <ControlButton label="Subtitles"><Line className="h-4 w-[21px]" box="0 0 21 16"><rect x="1" y="1" width="19" height="14" rx="2.500" /><path d="M4 9h2M8.500 9H17M4 12h8.500M15 12h2" /></Line></ControlButton>
          <ControlButton label="Unmute"><Line className="h-4 w-5" box="0 0 20 16"><path d="M1 5.500h3L8 2v12l-4-3.500H1ZM12 4.500l7 7M19 4.500l-7 7" /></Line></ControlButton>
          <ControlButton label="Full screen"><Line className="size-5" box="0 0 20 20"><path d="m1.500 18.500 17-17M10.500 1.500h8v8M1.500 10.500v8h8" /></Line></ControlButton>
          <ControlButton label="Mini player"><Line className="size-5" box="0 0 20 20"><path d="M1.500 8V4A2.500 2.500 0 0 1 4 1.500h12A2.500 2.500 0 0 1 18.500 4v12a2.500 2.500 0 0 1-2.500 2.500h-4M10.500 1.500V8a1.500 1.500 0 0 0 1.500 1.500h6.500M2.500 12H8v5.500M8 12l-6.500 6.500" /></Line></ControlButton>
          <ControlButton label="More"><DotsIcon className="h-[6px] w-[18px]" /></ControlButton>
        </div>
      </div>
      <span className="absolute bottom-full left-1/2 mb-4 flex h-[38px] w-[55px] -translate-x-1/2 items-center justify-center rounded-[5px] border border-[#3d3d3d] bg-[#323232] text-sm shadow-[0_4px_8px_rgba(0,0,0,0.3)]">Seek</span>
    </footer>
  );
}

function DesktopTaskbar() {
  return (
    <div className="grid h-[60px] grid-cols-[1fr_auto_1fr] items-center bg-[linear-gradient(to_right,#d8d8d8,#dcdcdc_8%,#eff0f0_12%,#f0f0f0_82%,#dbdbdb_88%,#d9d9d9)] text-[#1b1b1b]">
      <div className="pl-[23px]"><WeatherIcon className="size-[28px]" /></div>
      <div className="flex items-center">
        <button aria-label="Start" className="flex w-[55px] justify-center"><WindowsIcon className="size-[29px]" /></button>
        <label className="mx-1 flex h-[39px] w-[274px] items-center overflow-hidden rounded-full border border-[#dcdcdc] border-b-[#bdbdbd] bg-[#fbfbfb] pr-[5px] pl-[13px]">
          <SearchIcon className="size-[19px] shrink-0" />
          <input type="text" aria-label="Search" placeholder="Search" className="ml-3 min-w-0 flex-1 bg-transparent text-base placeholder:text-[#5a5a5a]" />
          <PharaohIcon className="mt-[2px] h-[34px] w-[54px] shrink-0" />
        </label>
        {desktopApps.map((a) => (
          <button key={a.name} aria-label={a.name} className="relative flex h-[60px] w-[55px] items-center justify-center">
            {a.state === "active" && <span className="absolute inset-x-[3px] inset-y-[6px] rounded-md border border-[#e4e4e4] bg-[#f9f9f9]" />}
            <a.icon className="relative size-[30px]" />
            <Indicator state={a.state ?? "none"} />
          </button>
        ))}
      </div>
      <div className="flex items-center justify-end pr-6 text-sm leading-5">
        <ChevronUp className="h-[10px] w-[18px]" />
        <div className="ml-[18px] w-8 text-center">ENG<br />IN</div>
        <WifiIcon className="ml-[21px] h-4 w-5" />
        <VolumeIcon className="ml-[10px] h-[18px] w-5" />
        <BatteryPlugIcon className="ml-[10px] h-[17px] w-[21px]" />
        <div className="ml-[18px] w-[75px] text-right">12:15<br />04-11-2024</div>
        <span className="ml-[14px] flex size-5 items-center justify-center rounded-full bg-[#00b7c3] text-[13px] text-white">2</span>
      </div>
    </div>
  );
}

export default function App() {
  return (
    <div className={`flex min-h-screen flex-col bg-black ${UI}`}>
      <SharedGradients />
      <section className="relative flex flex-1 flex-col pr-[54px] pl-[53px]">
        <div className="relative flex flex-1 flex-col">
          <TabStrip />
          <Toolbar />
          <div className="flex flex-1">
            <RegisterPage />
            <Sidebar />
          </div>
          <RecordedTaskbar />
          <Watermark />
        </div>
        <PlayerTitleBar />
        <PlayerControls />
      </section>
      <DesktopTaskbar />
    </div>
  );
}
